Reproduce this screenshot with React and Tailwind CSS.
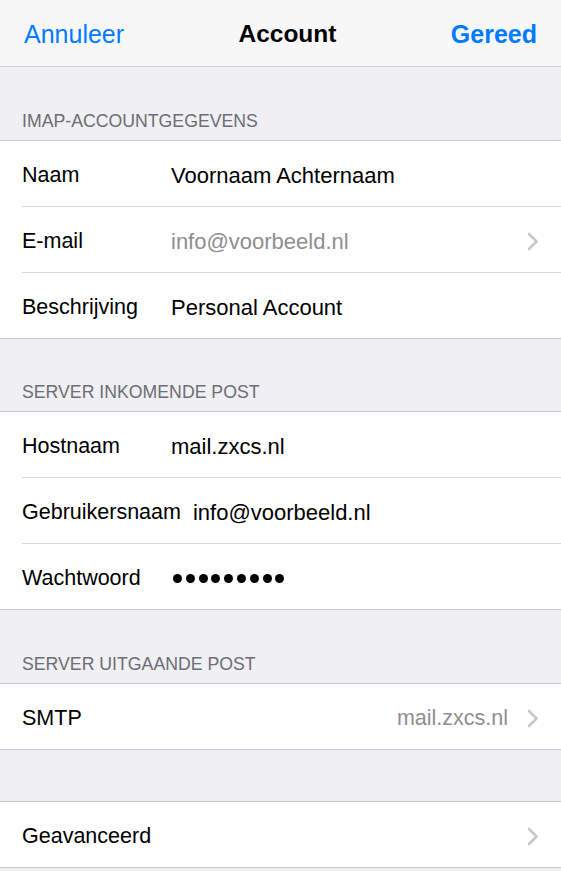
import React from "react";

const font = { fontFamily: '"Liberation Sans", Arial, sans-serif' };

function Chevron() {
  return (
    <svg width="12" height="19" viewBox="0 0 12 19" className="shrink-0">
      <path d="M2 2 L9.5 9.5 L2 17" fill="none" stroke="#c7c7cc" strokeWidth="2.6" strokeLinecap="round" strokeLinejoin="round" />
    </svg>
  );
}

function Row({ label, value, gray, chevron, right, last, dots }) {
  return (
    <div className="pl-[22px] bg-white">
      <div className={`flex items-center pr-[22px] pt-[3px] ${last ? "h-[65px]" : "h-[66px] border-b border-[#d9d9dd]"}`}>
        <div className="text-[21.5px] text-black whitespace-nowrap min-w-[137px] mr-[12px]">{label}</div>
        {dots ? (
          <div className="flex gap-[3.8px] ml-[2px]">
            {Array.from({ length: 9 }).map((_, i) => (
              <div key={i} className="w-[9px] h-[9px] rounded-full bg-black" />
            ))}
          </div>
        ) : right ? (
          <div className="flex-1" />
        ) : (
          <div className={`text-[22px] whitespace-nowrap ${gray ? "text-[#8e8e93]" : "text-black"}`}>{value}</div>
        )}
        {right && <div className="text-[21.5px] text-[#8e8e93] whitespace-nowrap mr-[19px]">{value}</div>}
        {!right && <div className="flex-1" />}
        {chevron && <Chevron />}
      </div>
    </div>
  );
}

function Group({ children }) {
  return <div className="border-t border-b border-[#c8c7cc] bg-white">{children}</div>;
}

function SectionHeader({ text, h }) {
  return (
    <div className={`flex items-end pl-[22px] pb-[8px] ${h}`}>
      <div className="text-[17.7px] leading-[22px] text-[#6d6d72]">{text}</div>
    </div>
  );
}

export default function App() {
  return (
    <div style={font} className="w-[561px] h-[871px] overflow-hidden bg-[#efeff4]">
      <div className="h-[67px] pt-[3px] bg-[#f7f7f8] border-b border-[#cfcfd3] flex items-center justify-between px-[24px]">
        <div className="text-[25px] text-[#007aff]">Annuleer</div>
        <div className="text-[24.5px] font-bold text-black">Account</div>
        <div className="text-[25px] font-bold text-[#007aff]">Gereed</div>
      </div>
      <SectionHeader text="IMAP-ACCOUNTGEGEVENS" h="h-[73px]" />
      <Group>
        <Row label="Naam" value="Voornaam Achternaam" />
        <Row label="E-mail" value="info@voorbeeld.nl" gray chevron />
        <Row label="Beschrijving" value="Personal Account" last />
      </Group>
      <SectionHeader text="SERVER INKOMENDE POST" h="h-[72px]" />
      <Group>
        <Row label="Hostnaam" value="mail.zxcs.nl" />
        <Row label="Gebruikersnaam" value="info@voorbeeld.nl" />
        <Row label="Wachtwoord" dots last />
      </Group>
      <SectionHeader text="SERVER UITGAANDE POST" h="h-[73px]" />
      <Group>
        <Row label="SMTP" value="mail.zxcs.nl" right chevron last />
      </Group>
      <div className="h-[51px]" />
      <Group>
        <Row label="Geavanceerd" chevron last />
      </Group>
    </div>
  );
}
